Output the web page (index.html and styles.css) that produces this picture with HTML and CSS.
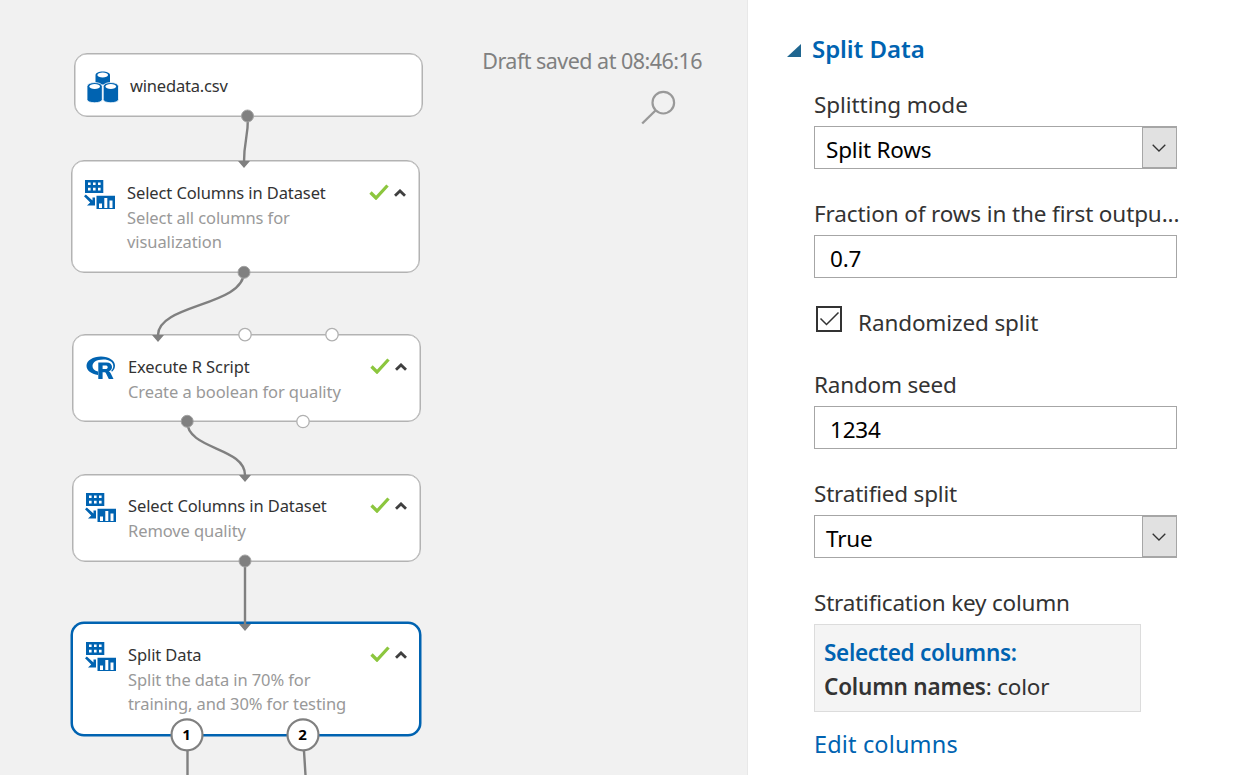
FILE: index.html
```html
<!DOCTYPE html>
<html lang="en">
<head>
<meta charset="utf-8">
<title>Experiment designer</title>
<link rel="stylesheet" href="styles.css">
</head>
<body>
<svg class="defs" width="0" height="0" aria-hidden="true">
  <symbol id="columns" viewBox="0 0 32 30">
    <path fill="#0063b1" fill-rule="evenodd" d="M1 1h18.300v13H1zM4 3.500v2.600h2.600v-2.600zM9 3.500v2.600h2.600v-2.600zM14 3.500v2.600h2.600v-2.600zM4 8.800v2.600h2.600v-2.600zM9 8.800v2.600h2.600v-2.600zM14 8.800v2.600h2.600v-2.600z"/>
    <path fill="#0063b1" d="M0 17.200l1.800-1.700 6.700 6V18.500h2.500V26.500H3l3.200-3z"/>
    <path fill="#0063b1" fill-rule="evenodd" d="M12.500 16.700h18.500V30H12.500zM15 24.500v4.500h3v-4.500zM20.300 19v10h3V19zM25.500 21.500v7.500h3v-7.500z"/>
  </symbol>
  <symbol id="check" viewBox="0 0 20 16"><path d="M1.500 8.500l5.500 5.500L18.500 1.500" fill="none" stroke="#8cc63e" stroke-width="3.300"/></symbol>
  <symbol id="up" viewBox="0 0 12 8"><path d="M1 6.800l5-4.900 5 4.900" fill="none" stroke="#404040" stroke-width="2.800"/></symbol>
</svg>
<div class="app">
  <main class="canvas">
    <div class="toolbar">
      <div class="status">Draft saved at 08:46:16</div>
      <svg class="search" viewBox="0 0 36 36"><circle cx="22.300" cy="12.700" r="10.800" fill="none" stroke="#999" stroke-width="2.200"/><path d="M14.500 20.500L1.200 33.500" stroke="#999" stroke-width="2.400"/></svg>
    </div>
    <section class="node n1">
      <svg class="icon data" viewBox="0 0 32 32"><path fill="#0063b1" d="M8.500 4v9.500h14.500V4c0-4.700-14.500-4.700-14.500 0z"/><path fill="#0063b1" stroke="#fff" stroke-width=".8" d="M0 15.500V28.500c0 4.300 15.300 4.300 15.300 0V15.500c0-5.300-15.300-5.300-15.300 0zM16.200 15.500V28.500c0 4.300 15.300 4.300 15.300 0V15.500c0-5.300-15.300-5.300-15.300 0z"/><g fill="#fff"><ellipse cx="15.700" cy="4" rx="5.300" ry="2.500"/><ellipse cx="7.700" cy="15.500" rx="5.300" ry="2.500"/><ellipse cx="23.800" cy="15.500" rx="5.300" ry="2.500"/></g></svg>
      <div class="text"><h3>winedata.csv</h3></div>
    </section>
    <section class="node n2"><svg class="icon"><use href="#columns"/></svg><div class="text"><h3>Select Columns in Dataset</h3><p>Select all columns for<br>visualization</p></div><svg class="check"><use href="#check"/></svg><svg class="up"><use href="#up"/></svg></section>
    <section class="node n3">
      <svg class="icon r" viewBox="0 0 30 24"><path fill="#0063b1" fill-rule="evenodd" d="M15 .5C23 .5 29 4.500 29 9.500c0 2.500-1 4.500-3 6.200l-.8-1c1.400-1.300 2.100-2.900 2.100-4.700 0-4.200-4.300-6.500-10-6.500C10.500 3.500 6.500 6.300 6.500 10c0 2.700 2 4.700 5.500 5.600v3.400C5 18 .5 14.500.5 9.800.5 4.500 7 .5 15 .5z"/><path fill="#0063b1" fill-rule="evenodd" d="M12.300 6.500H20.500c3.700 0 5.500 1.800 5.500 4.500 0 2.200-1.200 3.700-3.300 4.300.9.300 1.500 1 2 2l2.800 5.700h-4.700l-2.600-5.300c-.5-1-1-1.400-2-1.400h-1.600V23h-4.300zM16.600 9.600v3.500h2.800c1.600 0 2.300-.6 2.300-1.800s-.7-1.700-2.300-1.700z"/></svg>
      <div class="text"><h3>Execute R Script</h3><p>Create a boolean for quality</p></div><svg class="check"><use href="#check"/></svg><svg class="up"><use href="#up"/></svg></section>
    <section class="node n4"><svg class="icon"><use href="#columns"/></svg><div class="text"><h3>Select Columns in Dataset</h3><p>Remove quality</p></div><svg class="check"><use href="#check"/></svg><svg class="up"><use href="#up"/></svg></section>
    <section class="node n5"><svg class="icon"><use href="#columns"/></svg><div class="text"><h3>Split Data</h3><p>Split the data in 70% for<br>training, and 30% for testing</p></div><svg class="check"><use href="#check"/></svg><svg class="up"><use href="#up"/></svg></section>
    <svg class="wires" viewBox="0 0 748 775">
      <g fill="none" stroke="#808080" stroke-width="2.400">
        <path d="M248 116C248 140 244 140 244 162"/><path d="M244 272C244 306 158 304 158 335"/><path d="M187 421C187 450 245 447 245 475"/><path d="M245 561V624M187.500 735V775M303 735L305.500 775"/>
      </g>
      <path fill="#808080" d="M238 161h12l-6 7zM152 335h12l-6 7zM239 475h12l-6 7zM239 624h12l-6 7z"/>
      <g fill="#808080" stroke="#a3a3a3"><circle cx="247.500" cy="116" r="6"/><circle cx="244" cy="272.300" r="6"/><circle cx="187.200" cy="421.300" r="6"/><circle cx="245" cy="561" r="6"/></g>
      <g fill="#fff" stroke="#b0b0b0" stroke-width="1.300"><circle cx="245" cy="334.600" r="6.200"/><circle cx="332" cy="334.600" r="6.200"/><circle cx="303" cy="421.500" r="6.200"/></g>
      <g fill="#fff" stroke="#808080" stroke-width="2.200"><circle cx="187" cy="734.800" r="15.500"/><circle cx="303" cy="734.800" r="15.500"/></g>
      <g class="portnum"><text x="186.500" y="740">1</text><text x="302.500" y="740">2</text></g>
    </svg>
  </main>
  <aside class="panel">
    <h2><svg class="tri" viewBox="0 0 14 14"><path d="M14 1v13H0z" fill="#1f6690"/></svg><span>Split Data</span></h2>
    <div class="field"><label class="wide">Splitting mode</label><div class="box"><span>Split Rows</span><span class="drop"><svg viewBox="0 0 14 8"><path d="M.7.7L7 7l6.300-6.300" fill="none" stroke="#333" stroke-width="1.300"/></svg></span></div></div>
    <div class="field"><label class="long">Fraction of rows in the first outpu...</label><div class="box input"><span>0.7</span></div></div>
    <div class="checkrow"><svg class="cb" viewBox="0 0 26 26"><path d="M1 1h24v24H1z" fill="#fff" stroke="#333" stroke-width="2"/><path d="M4.500 12.500l6 6L22.500 6.500" fill="none" stroke="#333" stroke-width="1.500"/></svg><span class="long">Randomized split</span></div>
    <div class="field"><label>Random seed</label><div class="box input"><span>1234</span></div></div>
    <div class="field"><label>Stratified split</label><div class="box"><span>True</span><span class="drop"><svg viewBox="0 0 14 8"><path d="M.7.7L7 7l6.300-6.300" fill="none" stroke="#333" stroke-width="1.300"/></svg></span></div></div>
    <div class="field last"><label>Stratification key column</label><div class="selected"><div class="blue">Selected columns:</div><div class="names"><b>Column names</b>: color</div></div></div>
    <a class="edit">Edit columns</a>
  </aside>
</div>
</body>
</html>
```
FILE: styles.css
```css
* { box-sizing: border-box; }
body { margin: 0; font-family: "Noto Sans", sans-serif; background: #fff; color: #333; }
h2, h3, p { margin: 0; font-weight: 400; }
svg { display: block; flex: none; }
.defs { position: absolute; }
.app { display: flex; width: 1247px; height: 775px; overflow: hidden; }
.canvas { position: relative; width: 748px; height: 775px; background: #f1f1f1; border-right: 1px solid #e8e8e8; overflow: hidden; }
.toolbar { display: flex; flex-direction: column; align-items: flex-end; padding: 46px 45px 0 0; }
.status { font-size: 21.500px; line-height: 30px; color: #808080; letter-spacing: -.53px; white-space: nowrap; }
.search { width: 36px; height: 36px; margin: 14px 25px 0 0; }
.node { position: absolute; display: flex; width: 349px; background: #fff; border: 1px solid #b3b3b3; box-shadow: inset 0 0 0 .5px #b3b3b3; border-radius: 13px; padding: 20px 13px 0 12px; }
.n1 { left: 74px; top: 53px; height: 64px; }
.n2 { left: 71px; top: 160px; height: 113px; }
.n3 { left: 72px; top: 334px; height: 88px; }
.n4 { left: 72px; top: 474px; height: 88px; padding-top: 19px; }
.n5 { left: 71px; top: 622px; width: 350px; height: 114px; border: 2.500px solid #0063b1; box-shadow: 0 0 0 .5px #0063b1; padding: 19px 12px 0; }
.icon { width: 32px; height: 30px; margin-top: -2px; }
.icon.data { width: 32px; height: 32px; margin-top: -3px; }
.icon.r { width: 30px; height: 24px; margin: 1px 1px 0 1px; }
.text { flex: 1; margin-left: 11px; white-space: nowrap; font-size: 16.500px; line-height: 24.500px; }
h3 { font-size: inherit; line-height: inherit; letter-spacing: -.1px; }
.n1 h3 { letter-spacing: -.2px; }
p { color: #999; letter-spacing: -.09px; }
.check { width: 20px; height: 16px; margin: 3px 5px 0 0; }
.up { width: 12px; height: 8px; margin-top: 8px; }
.wires { position: absolute; left: 0; top: 0; width: 748px; height: 775px; }
.portnum { font-size: 15px; font-weight: 700; text-anchor: middle; fill: #000; }
.panel { width: 499px; padding: 32px 0 0 66px; font-size: 22.500px; line-height: 34px; white-space: nowrap; letter-spacing: -.2px; }
h2 { display: flex; align-items: center; gap: 11px; margin-left: -27px; height: 34px; font-size: 24px; font-weight: 600; color: #0063b1; letter-spacing: -.05px; }
.tri { width: 14px; height: 14px; margin-top: 1px; }
.field { height: 109px; }
h2 + .field { margin-top: 22px; }
.field label { display: block; height: 38px; }
.wide { letter-spacing: -.06px; }
.long { letter-spacing: -.12px; }
.box { display: flex; justify-content: space-between; width: 363px; height: 43px; border: 1px solid #a6a6a6; color: #000; padding-left: 11px; line-height: 45px; }
.box.input { padding-left: 15px; }
.drop { display: flex; align-items: center; justify-content: center; width: 35px; height: 41px; background: #e1e1e1; border: 1px solid #a6a6a6; margin-right: -.5px; }
.drop svg { width: 14px; height: 8px; }
.checkrow { display: flex; gap: 16px; height: 62px; padding-left: 2px; }
.cb { width: 26px; height: 26px; }
.selected { width: 327px; height: 88px; background: #f4f4f4; border: 1px solid #dcdcdc; padding: 11px 9px; }
.selected div { height: 34px; }
.blue, b { font-weight: 600; }
.blue { letter-spacing: -.3px; }
.blue, .edit { color: #0063b1; }
.last { height: 141px; }
.edit { display: block; font-size: 23.500px; letter-spacing: .15px; }
```
